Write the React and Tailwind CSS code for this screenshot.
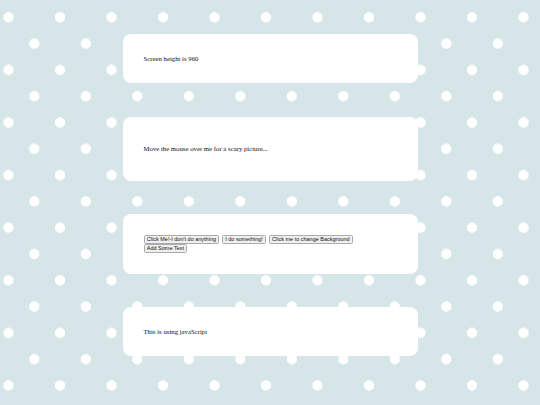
import React from "react";

const serif = "font-['Liberation_Serif',serif]";

function Card({ h, children }) {
  return (
    <div className={`w-[295px] ${h} bg-white rounded-[8px] px-[21px] flex items-center ${serif} text-[6.75px] text-[#111]`}>
      {children}
    </div>
  );
}

function Btn({ children }) {
  return (
    <button className="h-[8.5px] px-[2.3px] bg-[#efefef] border border-[#ababab] rounded-[1.5px] font-['Liberation_Sans',sans-serif] text-[5.5px] leading-none text-[#111] whitespace-nowrap">
      {children}
    </button>
  );
}

export default function App() {
  return (
    <div className="w-full h-[405px] overflow-hidden bg-[#d6e5e8] [background-image:radial-gradient(circle,#ffffff_4.9px,transparent_5.4px),radial-gradient(circle,#ffffff_4.9px,transparent_5.4px)] [background-size:51.5px_52.6px] [background-position:-17.25px_-9px,8.55px_17.3px]">
      <div className="flex flex-col items-center pt-[34px] gap-[33.4px]">
        <Card h="h-[49.3px]">
          <p>Screen height is 960</p>
        </Card>
        <Card h="h-[64px]">
          <p>Move the mouse over me for a scary picture...</p>
        </Card>
        <Card h="h-[60px]">
          <div className="flex flex-wrap gap-x-[2.6px] gap-y-[0.5px]">
            <Btn>Click Me!-I don't do anything</Btn>
            <Btn>I do something!</Btn>
            <Btn>Click me to change Background</Btn>
            <Btn>Add Some Text</Btn>
          </div>
        </Card>
        <Card h="h-[49px]">
          <p>This is using javaScript</p>
        </Card>
      </div>
    </div>
  );
}
